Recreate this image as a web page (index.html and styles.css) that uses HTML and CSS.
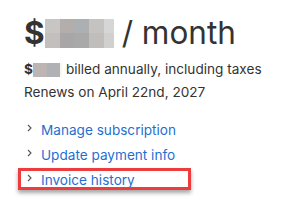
FILE: index.html
```html
<!DOCTYPE html>
<html>
<head>
<meta charset="utf-8">
<link rel="stylesheet" href="styles.css">
</head>
<body>
<div class="page">
  <div class="price">
    <span class="cur">$</span><span class="mosaic big">
      <i style="background:#c8c6c4"></i><i style="background:#b3aeab"></i><i style="background:#adb0b3"></i><i style="background:#c5c3c2"></i><i style="background:#d6d6d6"></i>
      <i style="background:#c2bfbd"></i><i style="background:#a8a6a6"></i><i style="background:#aaa9aa"></i><i style="background:#c1bdba"></i><i style="background:#d0d0cf"></i>
    </span><span class="per">/ month</span>
  </div>
  <div class="line first"><span class="cur-s">$</span><span class="mosaic small"><i style="background:#bdb5b3"></i><i style="background:#b0b1b5"></i><i style="background:#fbf8e8"></i></span>billed annually, including taxes</div>
  <div class="line">Renews on April 22nd, 2027</div>
  <ul class="links">
    <li><span class="chev"><svg width="5" height="8" viewBox="0 0 5 8"><path d="M1 1l3 3-3 3" fill="none" stroke="#555" stroke-width="1.1"/></svg></span><a>Manage subscription</a></li>
    <li><span class="chev"><svg width="5" height="8" viewBox="0 0 5 8"><path d="M1 1l3 3-3 3" fill="none" stroke="#555" stroke-width="1.1"/></svg></span><a>Update payment info</a></li>
    <li class="hl"><span class="chev"><svg width="5" height="8" viewBox="0 0 5 8"><path d="M1 1l3 3-3 3" fill="none" stroke="#555" stroke-width="1.1"/></svg></span><a>Invoice history</a></li>
  </ul>
</div>
</body>
</html>
```
FILE: styles.css
```css
html, body { margin: 0; padding: 0; background: #fff; }
body { font-family: Inter, "Noto Sans", sans-serif; color: #333; }
.page { box-sizing: border-box; width: 293px; height: 213px; padding: 12px 0 0 24px; }
.price { display: flex; align-items: center; height: 42px; font-size: 31.5px; line-height: 42px; white-space: nowrap; }
.cur { font-weight: 700; }
.mosaic { display: inline-grid; }
.mosaic.big { grid-template-columns: 15px 14px 15px 15px 10px; grid-template-rows: 14px 15px; margin: 0 8px 0 0; }
.mosaic.small { grid-template-columns: 14px 13px 2px; grid-template-rows: 14px; margin: 0 4px 0 0; vertical-align: -3px; }
.mosaic i { display: block; }
.line { font-size: 13.6px; line-height: 23px; white-space: nowrap; }
.line.first { margin-top: 4px; }
.cur-s { font-weight: 700; }
.links { list-style: none; margin: 13px 0 0 0; padding: 0; }
.links li { display: flex; align-items: center; height: 25px; font-size: 13.6px; }
.chev { width: 17px; display: flex; padding-left: 3px; box-sizing: border-box; margin-top: -3px; }
.links a { color: #1f6fd0; }
.hl { position: relative; }
.hl::after { content: ""; position: absolute; left: -6px; top: 1px; width: 167px; height: 16px; border: 3px solid #ec3c3e; box-shadow: 0 3px 4px rgba(0,0,0,0.35); }
```
